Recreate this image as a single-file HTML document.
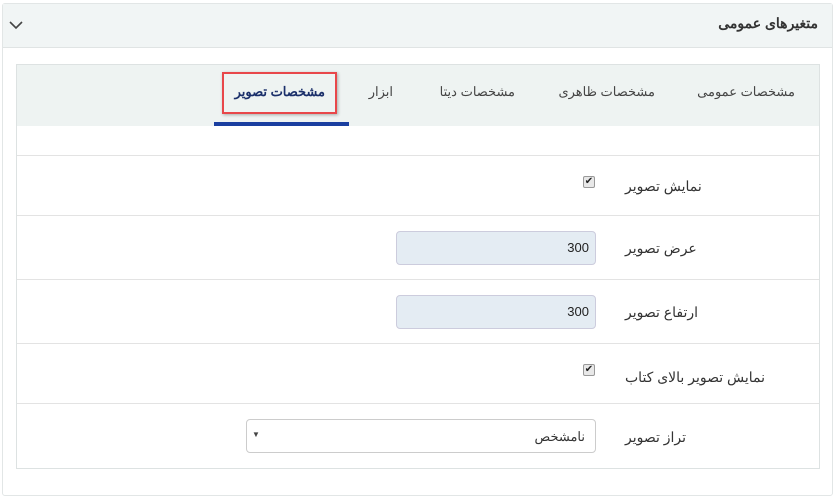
<!DOCTYPE html>
<html><head><meta charset="utf-8"><style>
*{box-sizing:border-box;margin:0;padding:0}
body{width:835px;height:499px;background:#fff;font-family:"Liberation Sans","Noto Sans CJK SC",sans-serif;color:#333;position:relative;overflow:hidden}
.a{position:absolute}
.outer{left:2px;top:3px;width:831px;height:493px;border:1px solid #e2e6e6;border-radius:3px}
.hdr{left:3px;top:4px;width:829px;height:44px;background:#f1f5f5;border-bottom:1px solid #e0e4e4}
.panel{left:16px;top:64px;width:804px;height:405px;border:1px solid #dde2e2}
.tabs{left:17px;top:65px;width:802px;height:61px;background:#eef3f2}
.t{font-size:13px;color:#444;direction:rtl;top:84px}
.hr{left:17px;width:802px;height:1px;background:#e3e3e3}
.lbl{font-size:14px;color:#333;direction:rtl;left:625px;white-space:nowrap}
.inp{left:396px;width:200px;height:34px;border:1px solid #ccd;border-radius:4px;background:#e4ecf3;font-size:13px;text-align:right;padding:8px 6px 0 0;color:#222}
.cb{left:583px;width:12px;height:12px;border:1px solid #999;border-radius:2px;background:#e8e8e8;font-size:10px;line-height:10px;text-align:center;color:#222}
</style></head><body>
<div class="a outer"></div>
<div class="a hdr"></div>
<div class="a" style="right:17px;top:15px;font-size:14px;font-weight:bold;direction:rtl;color:#333">متغیرهای عمومی</div>
<svg class="a" style="left:9px;top:20px" width="14" height="10"><path d="M1 2 L7 8 L13 2" fill="none" stroke="#444" stroke-width="1.6"/></svg>
<div class="a panel"></div>
<div class="a tabs"></div>
<div class="a t" style="right:40px">مشخصات عمومی</div>
<div class="a t" style="right:180px">مشخصات ظاهری</div>
<div class="a t" style="right:320px">مشخصات دیتا</div>
<div class="a t" style="right:442px">ابزار</div>
<div class="a t" style="right:510px;font-weight:bold;color:#1a2f6a">مشخصات تصویر</div>
<div class="a" style="left:222px;top:72px;width:115px;height:42px;border:2px solid #e8474a;box-shadow:1px 1px 3px rgba(0,0,0,.3)"></div>
<div class="a" style="left:214px;top:122px;width:135px;height:4px;background:#1a3fa0"></div>
<div class="a hr" style="top:155px"></div>
<div class="a hr" style="top:215px"></div>
<div class="a hr" style="top:279px"></div>
<div class="a hr" style="top:343px"></div>
<div class="a hr" style="top:403px"></div>
<div class="a lbl" style="top:178px">نمایش تصویر</div>
<div class="a cb" style="top:176px">✔</div>
<div class="a lbl" style="top:240px">عرض تصویر</div>
<div class="a inp" style="top:231px">300</div>
<div class="a lbl" style="top:304px">ارتفاع تصویر</div>
<div class="a inp" style="top:295px">300</div>
<div class="a lbl" style="top:369px">نمایش تصویر بالای کتاب</div>
<div class="a cb" style="top:364px">✔</div>
<div class="a lbl" style="top:429px">تراز تصویر</div>
<div class="a" style="left:246px;top:419px;width:350px;height:34px;border:1px solid #ccc;border-radius:4px;background:#fff"></div>
<div class="a" style="right:250px;top:429px;font-size:13px;direction:rtl">نامشخص</div>
<div class="a" style="left:252px;top:430px;font-size:8px;color:#444">▼</div>
</body></html>
